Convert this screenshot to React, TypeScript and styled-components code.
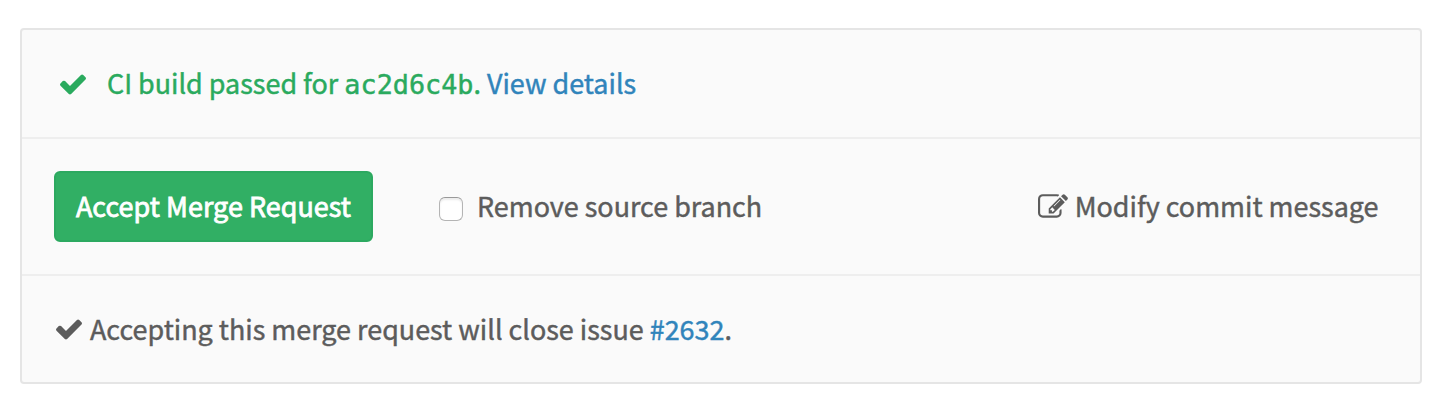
import React from "react";
import styled, { createGlobalStyle } from "styled-components";

const GlobalStyle = createGlobalStyle`
  *, *::before, *::after { box-sizing: border-box; }
  body {
    margin: 0;
    background: #fff;
    color: #5c5c5c;
    font-family: "Noto Sans CJK SC", "Noto Sans", sans-serif;
    font-size: 26.93px;
    line-height: 42px;
    -webkit-text-stroke: 0.45px currentColor;
  }
`;

const Widget = styled.section`
  margin: 28px 24px 0 20px;
  height: 356px;
  display: grid;
  grid-template-rows: 109px 137px 1fr;
  border: 2px solid #e5e5e5;
  border-radius: 4px;
  background: #fafafa;
  white-space: nowrap;
`;

const Row = styled.div<{ $left: number }>`
  display: flex;
  align-items: center;
  padding: 0 41.5px 0 ${(p) => p.$left}px;
  border-bottom: 2px solid #eee;
  &:last-child { border-bottom: 0; }
`;

const Text = styled.span<{ $color?: string }>`
  color: ${(p) => p.$color ?? "inherit"};
`;

const Message = styled.div`
  padding-bottom: 2px;
`;

const Sha = styled.span`
  font-family: "DejaVu Sans Mono", monospace;
  font-size: 26.8px;
  line-height: 1;
`;

const Link = styled.a`
  color: #3084bb;
  text-decoration: none;
`;

const Icon = styled.svg<{ $gap: number }>`
  flex: none;
  width: 30px;
  height: 30px;
  margin-right: ${(p) => p.$gap}px;
  fill: currentColor;
`;

const AcceptButton = styled.button`
  width: 319px;
  height: 71px;
  padding: 0 0 2px;
  border: 2px solid #2ca960;
  border-radius: 6px;
  background: #31af64;
  color: #fff;
  font: inherit;
  letter-spacing: 0.04px;
  -webkit-text-stroke: 0.8px currentColor;
`;

const RemoveLabel = styled.label`
  display: flex;
  align-items: center;
  gap: 14px;
  margin-left: 66px;
`;

const Checkbox = styled.input`
  appearance: none;
  width: 24px;
  height: 24px;
  margin: 4px 0 0;
  border: 1px solid #b4b4b4;
  border-top-color: #999;
  border-radius: 6px;
  background: #fff;
  box-shadow: inset 0 2px 2px #ececec;
`;

const ModifyAction = styled.a`
  display: flex;
  align-items: center;
  margin-left: auto;
`;

const CheckIcon = ({ color, gap }: { color: string; gap: number }) => (
  <Icon viewBox="0 0 1792 1792" $gap={gap} color={color} aria-hidden>
    <path d="M1671 566q0 40-28 68l-724 724-136 136q-28 28-68 28t-68-28l-136-136-362-362q-28-28-28-68t28-68l136-136q28-28 68-28t68 28l294 295 656-657q28-28 68-28t68 28l136 136q28 28 28 68z" />
  </Icon>
);

const EditIcon = () => (
  <Icon viewBox="0 0 1792 1792" $gap={6.5} aria-hidden>
    <path d="M888 1184l116-116-152-152-116 116v56h96v96h56zm440-720q-16-16-33 1l-350 350q-17 17-1 33t33-1l350-350q17-17 1-33zm80 594v190q0 119-84.5 203.5t-203.5 84.5h-832q-119 0-203.5-84.5t-84.5-203.5v-832q0-119 84.5-203.5t203.5-84.5h832q63 0 117 25 15 7 18 23 3 17-9 29l-49 49q-14 14-32 8-23-6-45-6h-832q-66 0-113 47t-47 113v832q0 66 47 113t113 47h832q66 0 113-47t47-113v-126q0-13 9-22l64-64q15-15 35-7t20 29zm-96-738l288 288-672 672h-288v-288zm444 132l-92 92-288-288 92-92q28-28 68-28t68 28l152 152q28 28 28 68t-28 68z" />
  </Icon>
);

export default function App() {
  return (
    <>
      <GlobalStyle />
      <Widget>
        <Row $left={36}>
          <CheckIcon color="#2aaa5e" gap={19} />
          <Message>
            <Text $color="#2aaa5e">
              CI build passed for <Sha>ac2d6c4b</Sha>.{" "}
            </Text>
            <Link>View details</Link>
          </Message>
        </Row>
        <Row $left={32}>
          <AcceptButton type="button">Accept Merge Request</AcceptButton>
          <RemoveLabel>
            <Checkbox type="checkbox" />
            <Message>Remove source branch</Message>
          </RemoveLabel>
          <ModifyAction>
            <EditIcon />
            <Message>Modify commit message</Message>
          </ModifyAction>
        </Row>
        <Row $left={32}>
          <CheckIcon color="#5c5c5c" gap={6} />
          <Text>
            Accepting this merge request will close issue <Link>#2632</Link>.
          </Text>
        </Row>
      </Widget>
    </>
  );
}
